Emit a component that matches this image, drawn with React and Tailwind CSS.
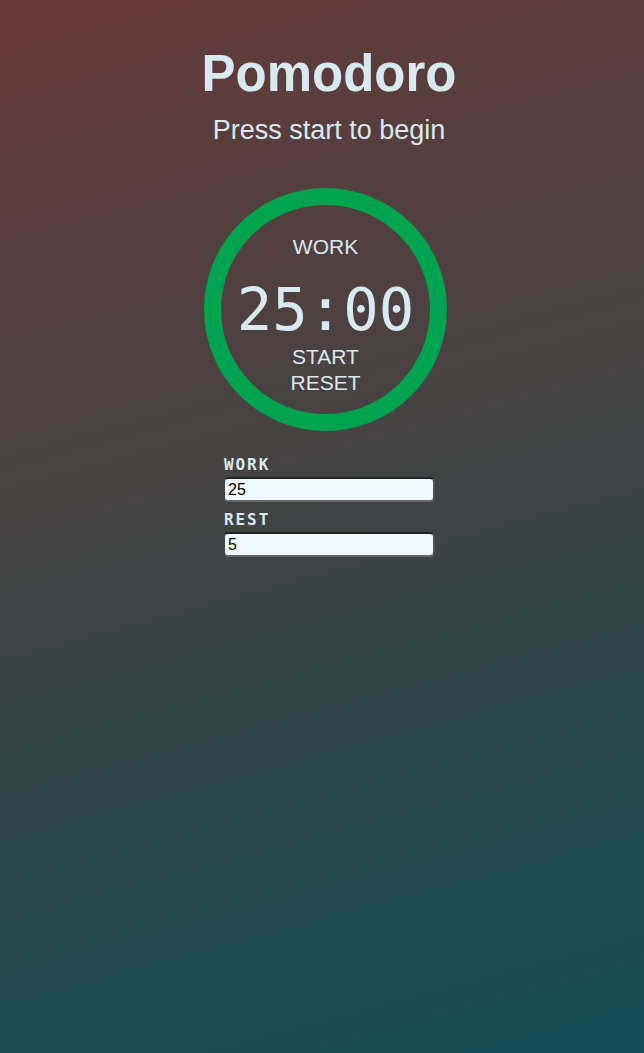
import React from "react";

export default function App() {
  return (
    <div
      className="min-h-screen w-full bg-[linear-gradient(165deg,#653a39_0%,#444343_45%,#124c53_100%)] flex flex-col items-center pl-[14px]"
      style={{ minHeight: "1053px" }}
    >
      <h1 className="mt-[44px] text-[51px] leading-[60px] font-bold text-[#d8e9f0] font-['Liberation_Sans',Arial,sans-serif]">
        Pomodoro
      </h1>
      <p className="mt-[11px] text-[27px] leading-[31px] text-[#d8e9f0] font-['Liberation_Sans',Arial,sans-serif]">
        Press start to begin
      </p>
      <div className="mt-[42px] mr-[7px] w-[243px] h-[243px] rounded-full border-[17px] border-[#00a34f] flex flex-col items-center text-[#d8e9f0] font-['Liberation_Sans',Arial,sans-serif]">
        <div className="mt-[30px] text-[21px] leading-[24px]">WORK</div>
        <div className="mt-[19px] text-[59px] leading-[64px] font-['DejaVu_Sans_Mono',monospace]">
          25:00
        </div>
        <button className="mt-[3px] text-[21px] leading-[24px] text-[#d8e9f0] bg-transparent">
          START
        </button>
        <button className="mt-[2px] text-[21px] leading-[24px] text-[#d8e9f0] bg-transparent">
          RESET
        </button>
      </div>
      <div className="mt-[25px] w-[212px] flex flex-col font-['DejaVu_Sans_Mono',monospace] text-[#d8e9f0]">
        <label className="text-[16px] leading-[18px] font-bold tracking-[0.12em] pl-[1px]">WORK</label>
        <input
          defaultValue="25"
          className="mt-[3px] h-[25px] w-[212px] bg-[#f0f8ff] border-2 border-t-[#222] border-l-[#444] border-r-[#555] border-b-[#666] rounded-[5px] px-[3px] text-[16px] text-black font-['Liberation_Sans',Arial,sans-serif] outline-none"
        />
        <label className="mt-[9px] text-[16px] leading-[18px] font-bold tracking-[0.12em] pl-[1px]">REST</label>
        <input
          defaultValue="5"
          className="mt-[3px] h-[25px] w-[212px] bg-[#f0f8ff] border-2 border-t-[#222] border-l-[#444] border-r-[#555] border-b-[#666] rounded-[5px] px-[3px] text-[16px] text-black font-['Liberation_Sans',Arial,sans-serif] outline-none"
        />
      </div>
    </div>
  );
}
